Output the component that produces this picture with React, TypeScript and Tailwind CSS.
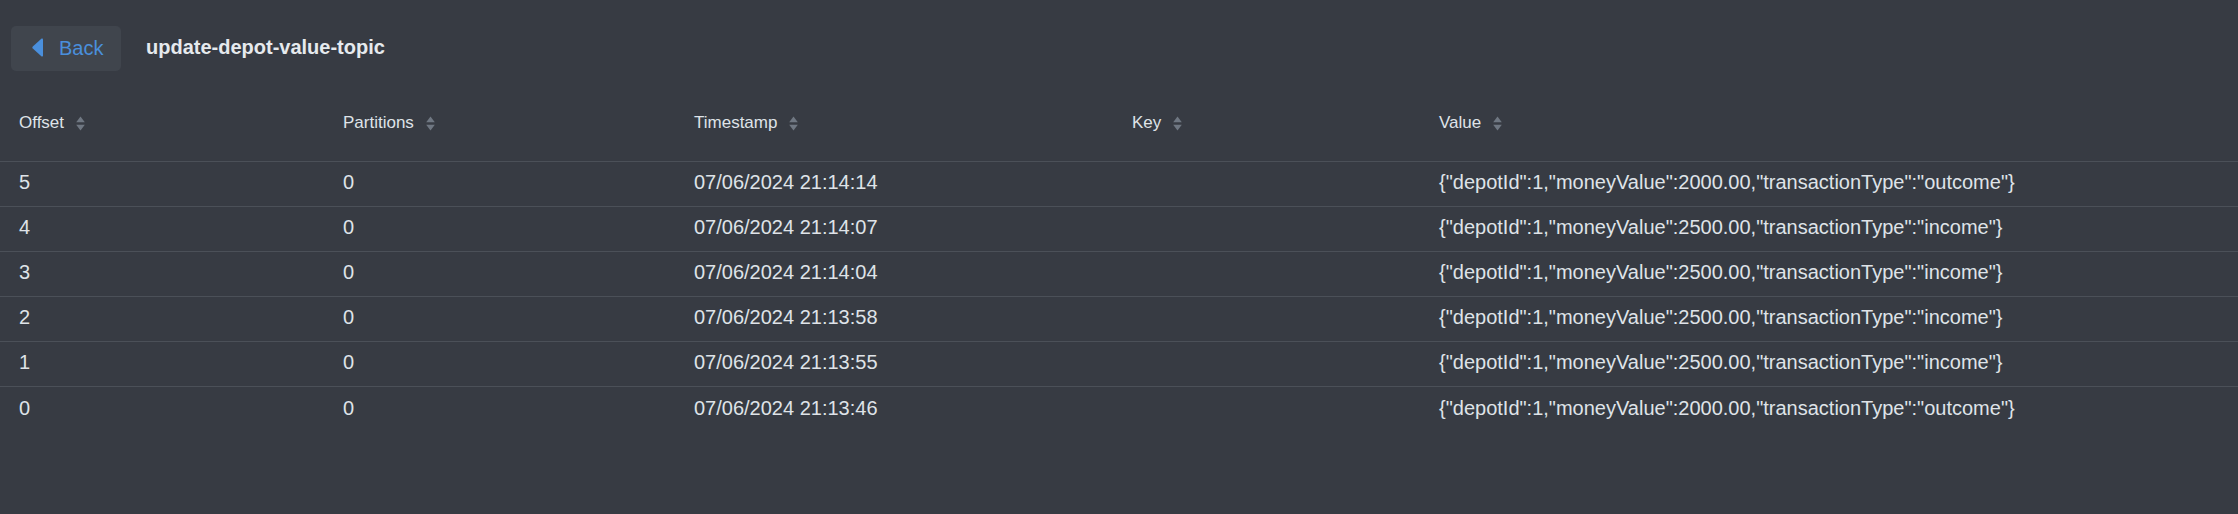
import { Fragment } from "react";

type Message = {
  offset: number;
  partition: number;
  timestamp: string;
  key: string;
  value: string;
};

const COLUMNS = ["Offset", "Partitions", "Timestamp", "Key", "Value"];

const MESSAGES: Message[] = [
  { offset: 5, partition: 0, timestamp: "07/06/2024 21:14:14", key: "", value: '{"depotId":1,"moneyValue":2000.00,"transactionType":"outcome"}' },
  { offset: 4, partition: 0, timestamp: "07/06/2024 21:14:07", key: "", value: '{"depotId":1,"moneyValue":2500.00,"transactionType":"income"}' },
  { offset: 3, partition: 0, timestamp: "07/06/2024 21:14:04", key: "", value: '{"depotId":1,"moneyValue":2500.00,"transactionType":"income"}' },
  { offset: 2, partition: 0, timestamp: "07/06/2024 21:13:58", key: "", value: '{"depotId":1,"moneyValue":2500.00,"transactionType":"income"}' },
  { offset: 1, partition: 0, timestamp: "07/06/2024 21:13:55", key: "", value: '{"depotId":1,"moneyValue":2500.00,"transactionType":"income"}' },
  { offset: 0, partition: 0, timestamp: "07/06/2024 21:13:46", key: "", value: '{"depotId":1,"moneyValue":2000.00,"transactionType":"outcome"}' },
];

function SortIcon() {
  return (
    <svg width="9" height="15" viewBox="0 0 9 15" className="ml-3 shrink-0" aria-hidden>
      <path d="M4.5 0.5 L8.8 6.3 L0.2 6.3 Z" fill="#6f7782" />
      <path d="M4.5 14.5 L8.8 8.7 L0.2 8.7 Z" fill="#6f7782" />
    </svg>
  );
}

function BackArrow() {
  return (
    <svg width="11" height="19" viewBox="0 0 11 19" aria-hidden>
      <path
        d="M9.6 0.6 C10.4 0.2 11 0.8 11 1.6 L11 17.4 C11 18.2 10.4 18.8 9.6 18.4 L0.8 10.6 C0.2 10 0.2 9 0.8 8.4 Z"
        fill="#4a8fdc"
      />
    </svg>
  );
}

export default function App() {
  return (
    <div
      className="min-h-[514px] w-full bg-[#373b43] text-[#dfe3e8]"
      style={{ fontFamily: '"Liberation Sans", Arial, sans-serif' }}
    >
      {/* ─── Top bar ─── */}
      <div className="flex items-center pl-[11px] pt-[26px]">
        <button className="flex h-[45px] w-[110px] items-center gap-4 rounded-[5px] bg-[#40454d] pb-[2px] pl-[21px] text-[20px] text-[#4a8fdc]">
          <BackArrow />
          <span>Back</span>
        </button>
        <h1 className="ml-[25px] pb-[3px] text-[20px] font-bold text-[#e6eaee]">
          update-depot-value-topic
        </h1>
      </div>

      {/* ─── Messages table ─── */}
      <div className="mt-[14px] grid grid-cols-[324px_351px_438px_307px_1fr]">
        {COLUMNS.map((c) => (
          <div
            key={c}
            className="flex h-[77px] items-center border-b border-[#4b5058] px-[19px] text-[17px]"
          >
            <span>{c}</span>
            <SortIcon />
          </div>
        ))}

        {MESSAGES.map((m, i) => {
          const rowCls =
            i < MESSAGES.length - 1
              ? "flex h-[45px] items-center border-b border-[#4b5058] px-[19px] pb-[4px] text-[20px] whitespace-nowrap"
              : "flex h-[45px] items-center px-[19px] pb-[4px] text-[20px] whitespace-nowrap";
          return (
            <Fragment key={m.offset}>
              <div className={rowCls}>{m.offset}</div>
              <div className={rowCls}>{m.partition}</div>
              <div className={rowCls}>{m.timestamp}</div>
              <div className={rowCls}>{m.key}</div>
              <div className={rowCls}>{m.value}</div>
            </Fragment>
          );
        })}
      </div>
    </div>
  );
}
